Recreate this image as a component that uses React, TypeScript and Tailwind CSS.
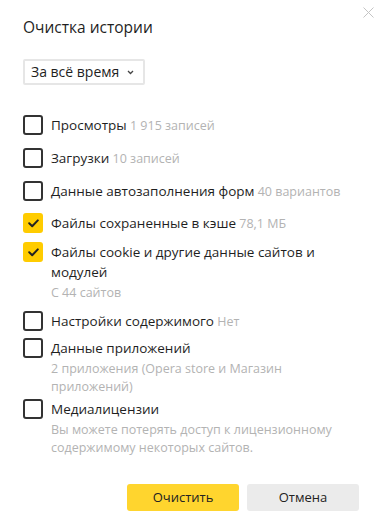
import React, { useState } from 'react';

type Item = {
  id: string;
  label: string;
  note?: string;
  sub?: string;
  checked: boolean;
  gap: string;
};

const items: Item[] = [
  { id: 'views', label: 'Просмотры', note: '1 915 записей', checked: false, gap: 'mt-0' },
  { id: 'downloads', label: 'Загрузки', note: '10 записей', checked: false, gap: 'mt-[12px]' },
  { id: 'autofill', label: 'Данные автозаполнения форм', note: '40 вариантов', checked: false, gap: 'mt-[12px]' },
  { id: 'cache', label: 'Файлы сохраненные в кэше', note: '78,1 МБ', checked: true, gap: 'mt-[11px]' },
  {
    id: 'cookies',
    label: 'Файлы cookie и другие данные сайтов и модулей',
    sub: 'С 44 сайтов',
    checked: true,
    gap: 'mt-[8px]',
  },
  { id: 'content', label: 'Настройки содержимого', note: 'Нет', checked: false, gap: 'mt-[9px]' },
  {
    id: 'apps',
    label: 'Данные приложений',
    sub: '2 приложения (Opera store и Магазин приложений)',
    checked: false,
    gap: 'mt-[6px]',
  },
  {
    id: 'media',
    label: 'Медиалицензии',
    sub: 'Вы можете потерять доступ к лицензионному содержимому некоторых сайтов.',
    checked: false,
    gap: 'mt-[3px]',
  },
];

const Checkbox = ({ checked }: { checked: boolean }) =>
  checked ? (
    <span className="w-[20px] h-[20px] shrink-0 rounded-[3px] bg-[#ffcc00] flex items-center justify-center">
      <svg width="11" height="9" viewBox="0 0 11 9" fill="none">
        <path d="M1.2 4.3 L4.2 7.2 L9.8 1.4" stroke="#222" strokeWidth="2" strokeLinecap="round" strokeLinejoin="round" />
      </svg>
    </span>
  ) : (
    <span className="w-[20px] h-[20px] shrink-0 rounded-[3px] border-2 border-[#333] bg-white" />
  );

export default function App() {
  const [state, setState] = useState<Record<string, boolean>>(
    Object.fromEntries(items.map((i) => [i.id, i.checked]))
  );

  return (
    <div className="w-[381px] h-[527px] bg-white relative font-['Open_Sans',sans-serif] text-[#1f1f1f] overflow-hidden">
      <button className="absolute top-[6px] right-[7px] w-[12px] h-[12px] flex items-center justify-center">
        <svg width="11" height="11" viewBox="0 0 11 11">
          <path d="M0.5 0.5 L10.5 10.5 M10.5 0.5 L0.5 10.5" stroke="#c4c4c4" strokeWidth="1" />
        </svg>
      </button>

      <div className="pl-[23px] pr-[22px] pt-[16px]">
        <h1 className="text-[15.5px] leading-[22px]">Очистка истории</h1>

        <div className="mt-[21px] w-[122px] h-[26px] border-2 border-[#e6e6e6] rounded-[2px] flex items-center justify-between pl-[6px] pr-[9px]">
          <span className="text-[14px] leading-[20px]">За всё время</span>
          <svg width="7" height="5" viewBox="0 0 7 5" fill="none">
            <path d="M1 1 L3.5 3.5 L6 1" stroke="#444" strokeWidth="1.3" />
          </svg>
        </div>

        <div className="mt-[30px] flex flex-col">
          {items.map((item) => (
            <div
              key={item.id}
              className={`${item.gap} flex items-start gap-[8px] cursor-pointer`}
              onClick={() => setState((s) => ({ ...s, [item.id]: !s[item.id] }))}
            >
              <Checkbox checked={state[item.id]} />
              <div className="flex flex-col">
                <span className="text-[13.5px] leading-[20px]">
                  {item.label}
                  {item.note && <span className="text-[12.5px] text-[#b3b3b3]"> {item.note}</span>}
                </span>
                {item.sub && (
                  <span className="mt-[2px] text-[12.5px] leading-[18px] text-[#b3b3b3]">{item.sub}</span>
                )}
              </div>
            </div>
          ))}
        </div>

        <div className="mt-[27px] flex justify-end gap-[8px]">
          <button className="w-[112px] h-[27px] rounded-[3px] bg-[#ffd52e] text-[13px] text-[#222]">Очистить</button>
          <button className="w-[112px] h-[27px] rounded-[3px] bg-[#ebebeb] text-[13px] text-[#222]">Отмена</button>
        </div>
      </div>
    </div>
  );
}
